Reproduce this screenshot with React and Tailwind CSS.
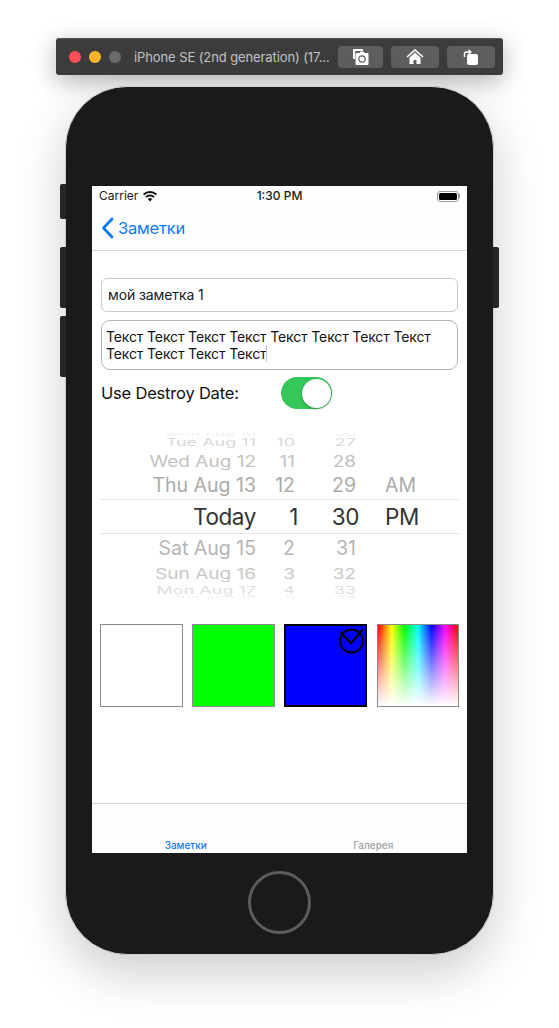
const rows = [
  { d: "Mon Aug 10", h: "9", m: "26", a: "", rh: "h-[2px]", cls: "text-[16px] scale-y-[0.3] text-[#efefef]" },
  { d: "Tue Aug 11", h: "10", m: "27", a: "", rh: "h-[15px] pr-[3px]", cls: "text-[18px] scale-y-[0.55] text-[#d9d9d9]" },
  { d: "Wed Aug 12", h: "11", m: "28", a: "", rh: "h-[21px] pt-[1px]", cls: "text-[19px] scale-y-[0.8] text-[#c2c2c2]" },
  { d: "Thu Aug 13", h: "12", m: "29", a: "AM", rh: "h-[28px] pt-[2px]", cls: "text-[19.5px] text-[#ababab]" },
  { d: "Today", h: "1", m: "30", a: "PM", rh: "h-[35px] pt-[2px] border-y border-[#e3e3e3]", cls: "text-[22.5px] tracking-[-0.4px] text-[#333333]", sel: true },
  { d: "Sat Aug 15", h: "2", m: "31", a: "", rh: "h-[28px] pt-[2px]", cls: "text-[19.5px] text-[#b5b5b5]" },
  { d: "Sun Aug 16", h: "3", m: "32", a: "", rh: "h-[21px] pt-[2px]", cls: "text-[19px] scale-y-[0.78] text-[#c8c8c8]" },
  { d: "Mon Aug 17", h: "4", m: "33", a: "", rh: "h-[13px] pt-[2px]", cls: "text-[18px] scale-y-[0.55] text-[#dedede]" },
  { d: "Tue Aug 18", h: "5", m: "34", a: "", rh: "h-[2px]", cls: "text-[16px] scale-y-[0.3] text-[#efefef]" },
];

function PickerRow({ r }) {
  const cell = `block whitespace-nowrap leading-none ${r.cls}`;
  return (
    <div className={`flex items-center ${r.rh}`}>
      <div className="w-[156px] flex justify-end shrink-0"><span className={cell}>{r.d}</span></div>
      <div className={`${r.sel ? "w-[42px]" : "w-[39px]"} flex justify-end shrink-0`}><span className={cell}>{r.h}</span></div>
      <div className="w-[61px] flex justify-end shrink-0"><span className={cell}>{r.m}</span></div>
      <div className={`${r.sel ? "ml-[26px]" : "ml-[29px]"} shrink-0`}><span className={cell}>{r.a}</span></div>
    </div>
  );
}

function ToolButton({ w, children }) {
  return <div className={`${w} h-[22px] rounded-[4px] bg-[#5e5e5e] flex items-center justify-center`}>{children}</div>;
}

function Swatch({ cls, children }) {
  return <div className={`relative h-[83px] ${cls}`}>{children}</div>;
}

export default function App() {
  return (
    <div className="w-[559px] h-[1028px] bg-white overflow-hidden flex flex-col items-center font-['Inter','Liberation_Sans',sans-serif]">
      {/* simulator toolbar */}
      <div className="mt-[38px] w-[447px] h-[37px] shrink-0 rounded-[3px] bg-[#3c3c3c] border-t border-[#555555] flex items-center pl-[13px] pr-[8px] shadow-[0_6px_24px_rgba(0,0,0,0.3)]">
        <span className="w-3 h-3 rounded-full bg-[#fc4e54]" />
        <span className="w-3 h-3 rounded-full bg-[#fdb52b] ml-2" />
        <span className="w-3 h-3 rounded-full bg-[#6a6a6a] ml-2" />
        <span className="ml-[13px] mt-[1px] w-[204px] text-[13px] tracking-[-0.1px] text-[#c4c4c4] whitespace-nowrap">iPhone SE (2nd generation) (17...</span>
        <div className="flex gap-2 ml-auto">
          <ToolButton w="w-[45px]">
            <svg width="18" height="18" viewBox="0 0 18 18">
              <path d="M2 1h9v2H4a1 1 0 0 0-1 1v7H1V2a1 1 0 0 1 1-1z" fill="#fff" />
              <path d="M4.5 5h3l1-1.5h3l1 1.5h3a1 1 0 0 1 1 1v10a1 1 0 0 1-1 1h-11a1 1 0 0 1-1-1V6a1 1 0 0 1 1-1z" fill="#fff" />
              <circle cx="10" cy="11" r="3.2" fill="#fff" stroke="#5e5e5e" strokeWidth="1.2" />
            </svg>
          </ToolButton>
          <ToolButton w="w-[48px]">
            <svg width="18" height="16" viewBox="0 0 18 16">
              <path d="M1 8 9 1l8 7" fill="none" stroke="#fff" strokeWidth="1.6" />
              <path d="M3.5 8.5 9 3.5l5.5 5V15h-4v-4h-3v4h-4z" fill="#fff" />
            </svg>
          </ToolButton>
          <ToolButton w="w-[48px]">
            <svg width="16" height="18" viewBox="0 0 16 18">
              <rect x="4" y="6" width="11" height="11" rx="2" fill="#fff" />
              <path d="M1.5 9V5.5a1.5 1.5 0 0 1 1.5-1.5h3" fill="none" stroke="#fff" strokeWidth="1.5" />
              <path d="M5.5 1 9 4 5.5 7z" fill="#fff" />
            </svg>
          </ToolButton>
        </div>
      </div>

      {/* phone */}
      <div className="relative mt-[11px] w-[429px] h-[869px] shrink-0 rounded-[62px] bg-[#1a1a1a] border border-[#cfcfcf] pt-[99px] flex flex-col items-center shadow-[0_18px_50px_rgba(0,0,0,0.2)]">
        <div className="absolute left-[-6px] top-[97px] w-[6px] h-[35px] rounded-l-[2px] bg-[#262626]" />
        <div className="absolute left-[-6px] top-[160px] w-[6px] h-[61px] rounded-l-[2px] bg-[#262626]" />
        <div className="absolute left-[-6px] top-[229px] w-[6px] h-[61px] rounded-l-[2px] bg-[#262626]" />
        <div className="absolute right-[-6px] top-[160px] w-[6px] h-[61px] rounded-r-[2px] bg-[#262626]" />

        {/* screen */}
        <div className="w-[375px] h-[667px] shrink-0 bg-white flex flex-col overflow-hidden">
          {/* status + nav */}
          <div className="h-[65px] shrink-0 bg-[#fdfdfd] border-b border-[#d8d8d8]">
            <div className="h-[20px] flex items-center relative px-[7px] text-[12px] text-[#1a1a1a]">
              <span>Carrier</span>
              <svg className="ml-[4px]" width="16" height="12" viewBox="0 0 16 12">
                <path d="M8 11.5 5.8 9.1a3.2 3.2 0 0 1 4.4 0z" fill="#111" />
                <path d="M3.9 7.1a6 6 0 0 1 8.2 0M1.6 4.6a9.3 9.3 0 0 1 12.8 0" fill="none" stroke="#111" strokeWidth="1.9" />
              </svg>
              <span className="absolute left-0 right-0 text-center font-medium">1:30 PM</span>
              <div className="ml-auto flex items-center">
                <div className="w-[22px] h-[11px] rounded-[3px] border border-[#9a9a9a] p-[1px]">
                  <div className="w-full h-full rounded-[1.5px] bg-black" />
                </div>
                <div className="w-[1px] h-[4px] bg-[#9a9a9a]" />
              </div>
            </div>
            <div className="h-[44px] flex items-center pl-[9px] text-[#0a7aff]">
              <svg width="13" height="22" viewBox="0 0 13 22">
                <path d="M11 2 2.5 11 11 20" fill="none" stroke="#0a7aff" strokeWidth="2.8" strokeLinecap="round" strokeLinejoin="round" />
              </svg>
              <span className="ml-[4px] text-[16.5px] tracking-[-0.2px]">Заметки</span>
            </div>
          </div>

          {/* content */}
          <div className="flex-1 flex flex-col">
            <div className="mt-[27px] mx-[9px] h-[34px] pb-[1px] shrink-0 rounded-[6px] border border-[#c9c9c9] flex items-center pl-[6px] text-[14px] tracking-[-0.1px] text-[#1a1a1a]">мой заметка 1</div>
            <div className="mt-[8px] mx-[9px] h-[50px] shrink-0 rounded-[9px] border border-[#b5b5b5] pl-[4px] pt-[7px] text-[14px] tracking-[-0.13px] leading-[17px] text-[#111111]">
              <div className="whitespace-nowrap">Текст Текст Текст Текст Текст Текст Текст Текст</div>
              <div className="whitespace-nowrap flex items-center">Текст Текст Текст Текст<span className="w-[1px] h-[17px] bg-[#b9c6f5]" /></div>
            </div>
            <div className="mt-[7px] ml-[9px] h-[32px] shrink-0 flex items-center">
              <span className="w-[180px] text-[16.5px] tracking-[-0.2px] text-[#111111] leading-none">Use Destroy Date:</span>
              <div className="w-[51px] h-[32px] rounded-full bg-[#34c759] flex items-center justify-end pr-[1px]">
                <div className="w-[29px] h-[29px] rounded-full bg-white shadow-[0_1px_3px_rgba(0,0,0,0.3)]" />
              </div>
            </div>

            {/* date picker */}
            <div className="mt-[24px] mx-[8px] w-[359px] flex flex-col overflow-hidden">
              {rows.map((r) => <PickerRow key={r.d} r={r} />)}
            </div>

            {/* colour swatches */}
            <div className="mt-[26px] mx-[8px] flex gap-[9px]">
              <Swatch cls="w-[83px] bg-white border border-[#8a8a8a]" />
              <Swatch cls="w-[83px] bg-[#00ff00] border border-[#8a8a8a]" />
              <Swatch cls="w-[83px] bg-[#0000ff] border-2 border-black">
                <svg className="absolute right-[-1px] top-[-2px]" width="30" height="30" viewBox="0 0 30 30">
                  <circle cx="15.5" cy="17" r="11.5" fill="none" stroke="#000" strokeWidth="2" />
                  <path d="M4.5 8 15 19.5 27 5" fill="none" stroke="#000" strokeWidth="2" />
                </svg>
              </Swatch>
              <Swatch cls="w-[82px] ml-auto border border-[#8a8a8a] bg-[linear-gradient(to_bottom,rgba(255,255,255,0),#ffffff),linear-gradient(to_right,#ff0000,#ffff00_17%,#00ff00_33%,#00ffff_50%,#0000ff_67%,#ff00ff_84%,#ff0000)]" />
            </div>
          </div>

          {/* tab bar */}
          <div className="h-[50px] shrink-0 bg-[#fdfdfd] border-t border-[#d8d8d8] flex items-end text-[10px] font-medium">
            <div className="flex-1 text-center text-[#0a7aff]">Заметки</div>
            <div className="flex-1 text-center text-[#a3a3a3]">Галерея</div>
          </div>
        </div>

        {/* home button */}
        <div className="mt-[18px] w-[63px] h-[63px] rounded-full border-[3px] border-[#5c5c5c]" />
      </div>
    </div>
  );
}
